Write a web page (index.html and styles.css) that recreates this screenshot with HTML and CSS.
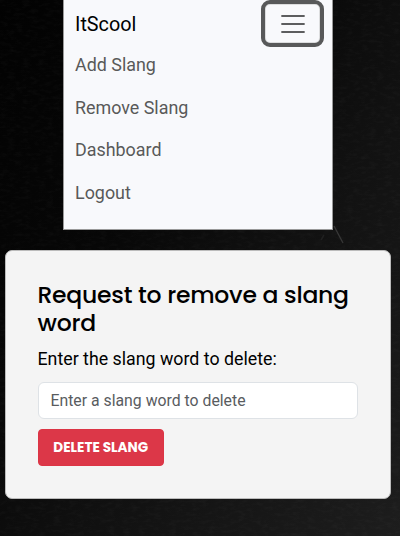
FILE: index.html
```
<!DOCTYPE html>
<html lang="en">
<head>
<meta charset="utf-8">
<title>ItScool</title>
<link rel="stylesheet" href="styles.css">
</head>
<body>
<svg class="chalk" viewBox="0 0 400 536" aria-hidden="true">
  <filter id="grain"><feTurbulence type="fractalNoise" baseFrequency="0.13 0.3" numOctaves="4" seed="4"/><feColorMatrix values="0 0 0 0 1  0 0 0 0 1  0 0 0 0 1  .3 0 0 0 -.13"/></filter>
  <rect width="400" height="536" filter="url(#grain)" opacity=".2"/>
  <path d="M334 226l9 17" stroke="#383838" stroke-width="1.3"/>
  <path d="M321 240l3-5" stroke="#202020" stroke-width="1.5"/>
</svg>
<nav class="navbar">
  <div class="top">
    <a class="brand">ItScool</a>
    <button class="toggler" aria-label="Menu">
      <svg width="30" height="30" viewBox="0 0 30 30"><path d="M4 7h22M4 15h22M4 23h22" stroke="#5c5d5f" stroke-width="1.8" stroke-linecap="round"/></svg>
    </button>
  </div>
  <ul class="links">
    <li>Add Slang</li>
    <li>Remove Slang</li>
    <li>Dashboard</li>
    <li>Logout</li>
  </ul>
</nav>
<main class="card">
  <h1>Request to remove a slang<br>word</h1>
  <label for="word">Enter the slang word to delete:</label>
  <input id="word" type="text" placeholder="Enter a slang word to delete">
  <button class="delete">DELETE SLANG</button>
</main>
</body>
</html>
```
FILE: styles.css
```
* { box-sizing: border-box; }
body {
  margin: 0;
  height: 536px;
  overflow: hidden;
  background: linear-gradient(125deg, #020202 0%, #070707 35%, #111 60%, #1d1d1d 100%);
  font-family: Roboto, sans-serif;
  color: #000;
}
.chalk { position: absolute; left: 0; top: 0; width: 400px; height: 536px; z-index: -1; }
.navbar {
  width: 270px;
  height: 230px;
  margin-left: 63px;
  padding: 0 8px 0 11px;
  background: #f8f9fc;
  border: solid #999;
  border-width: 0 1px 1px;
}
.top { display: flex; justify-content: space-between; height: 47px; }
.brand { font-size: 19.8px; line-height: 49px; }
.toggler {
  display: flex;
  align-items: center;
  justify-content: center;
  width: 63px;
  height: 47px;
  padding: 0;
  border: 4px solid #58595a;
  border-radius: 9px;
  background: #f8f9fc;
  box-shadow: inset 0 0 0 1px #dcddde;
}
.links { list-style: none; margin: 0; padding: 0; font-size: 17.9px; color: #595959; }
.links li { height: 42.6px; line-height: 36px; }
.card {
  width: 386px;
  height: 249px;
  margin: 20px 0 0 5px;
  padding: 30px 32px 31px 31.5px;
  border: 1px solid #bbb;
  border-radius: 7px;
  background: #f4f4f4;
}
h1 {
  margin: 0 0 8px;
  font: 500 23.5px/28px Poppins, Inter, sans-serif;
  letter-spacing: -0.24px;
  white-space: nowrap;
}
label { display: block; font-size: 17.8px; line-height: 27px; margin-bottom: 10px; }
input {
  display: block;
  width: 320.5px;
  height: 37px;
  padding: 0 12px;
  border: 1px solid #dee2e6;
  border-radius: 6px;
  background: #fff;
  font: 15.8px Roboto, sans-serif;
}
input::placeholder { color: #595c5f; opacity: 1; }
.delete {
  display: block;
  width: 126.5px;
  height: 37px;
  margin-top: 10px;
  padding: 0;
  border: 1px solid #dc3545;
  border-radius: 4px;
  background: #dc3748;
  color: #fff;
  font: 700 13.6px/35px Poppins, Inter, sans-serif;
  white-space: nowrap;
}
```
